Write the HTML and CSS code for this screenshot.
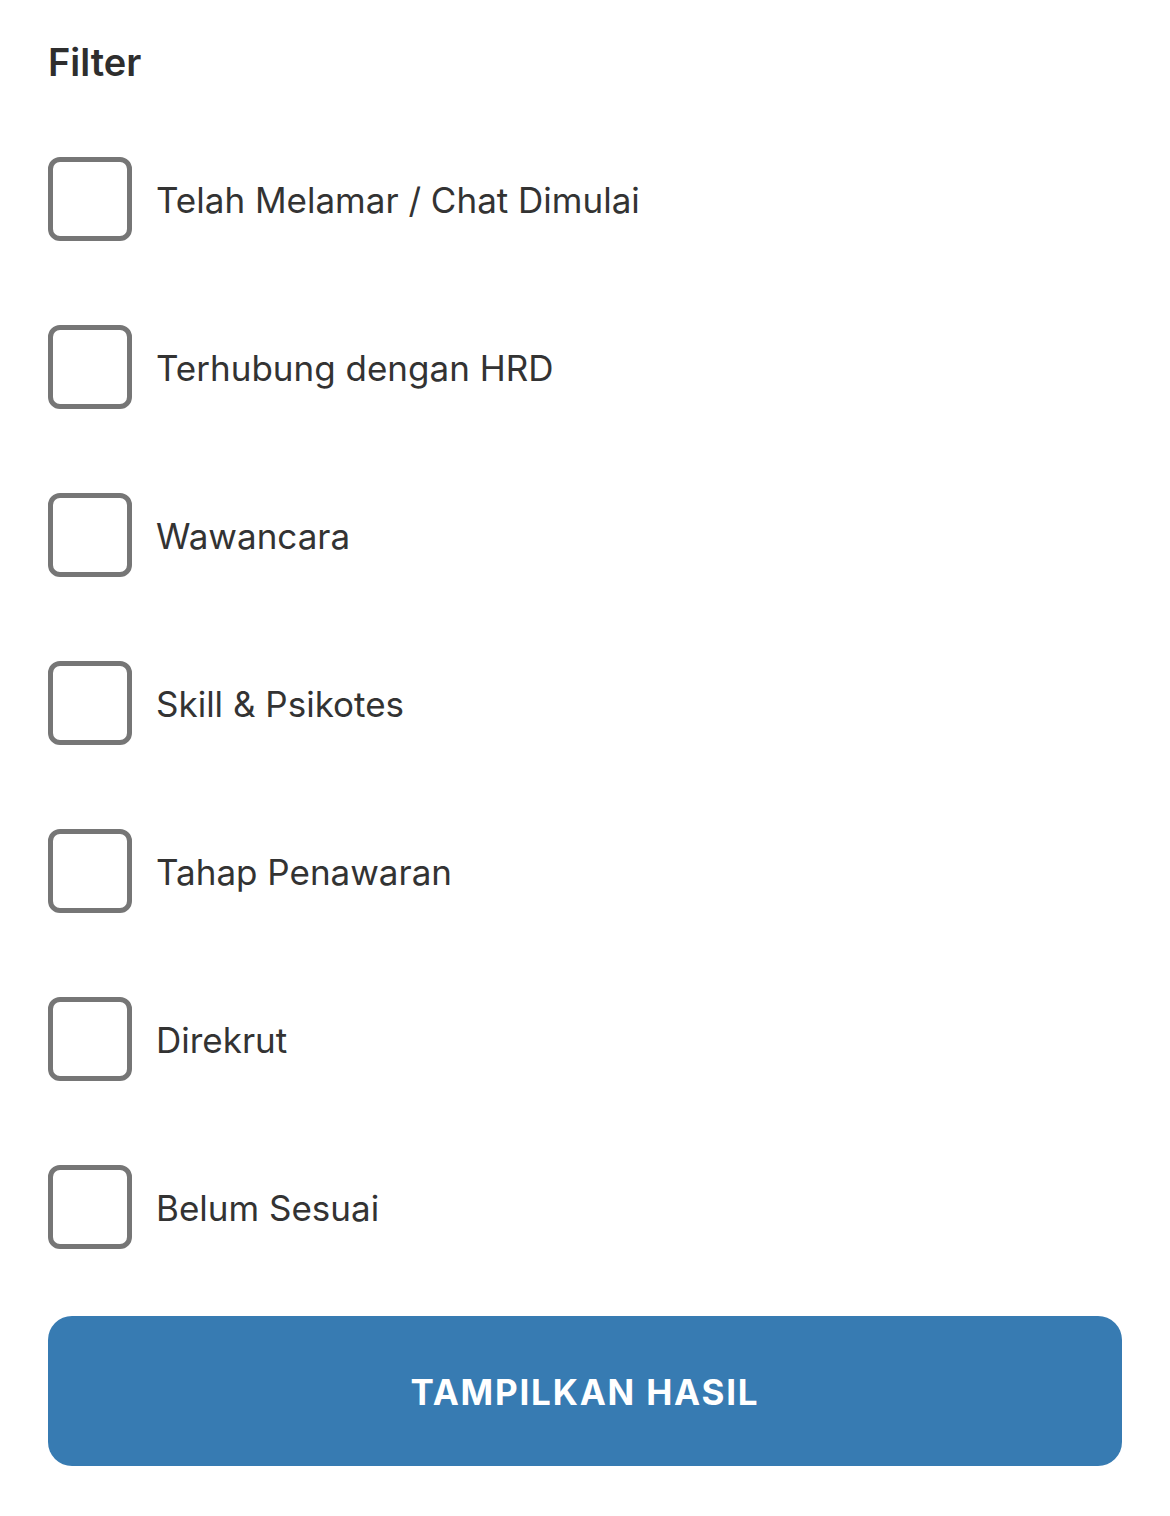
FILE: index.html
```html
<!DOCTYPE html>
<html lang="id">
<head>
    <meta charset="UTF-8">
    <meta name="viewport" content="width=device-width, initial-scale=1.0">
    <title>Filter</title>
    <link rel="stylesheet" href="styles.css">
</head>
<body>
    <div class="filter">
        <h1 class="filter-title">Filter</h1>
        <ul class="filter-list">
            <li class="filter-item"><span class="check"></span><span class="label">Telah Melamar / Chat Dimulai</span></li>
            <li class="filter-item"><span class="check"></span><span class="label">Terhubung dengan HRD</span></li>
            <li class="filter-item"><span class="check"></span><span class="label">Wawancara</span></li>
            <li class="filter-item"><span class="check"></span><span class="label">Skill &amp; Psikotes</span></li>
            <li class="filter-item"><span class="check"></span><span class="label">Tahap Penawaran</span></li>
            <li class="filter-item"><span class="check"></span><span class="label">Direkrut</span></li>
            <li class="filter-item"><span class="check"></span><span class="label">Belum Sesuai</span></li>
        </ul>
        <button type="button" class="submit">TAMPILKAN HASIL</button>
    </div>
</body>
</html>
```

FILE: styles.css
```css
body {
    margin: 0;
    background: #fff;
    font-family: Inter, "Noto Sans", sans-serif;
    color: #333;
}
.filter {
    padding: 38px 48px 0;
}
.filter-title {
    margin: 0 0 29px;
    font-size: 38px;
    line-height: 48px;
    font-weight: 600;
    color: #2e2e2e;
}
.filter-list {
    list-style: none;
    margin: 0;
    padding: 0;
}
.filter-item {
    display: flex;
    align-items: center;
    height: 168px;
    gap: 24px;
}
.check {
    width: 84px;
    height: 84px;
    box-sizing: border-box;
    border: 5px solid #767676;
    border-radius: 12px;
    flex-shrink: 0;
}
.label {
    font-size: 35px;
    line-height: 44px;
    padding-top: 1px;
    color: #333;
}
.submit {
    display: block;
    width: 100%;
    height: 150px;
    margin-top: 25px;
    padding-top: 2px;
    border: none;
    border-radius: 24px;
    background: #377bb2;
    color: #fff;
    font-family: Inter, "Noto Sans", sans-serif;
    font-size: 35px;
    font-weight: 700;
    letter-spacing: 1.8px;
}
```
